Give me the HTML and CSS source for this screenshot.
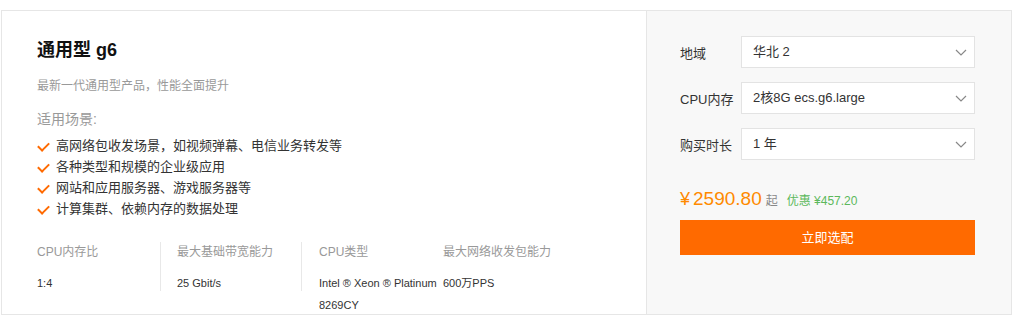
FILE: index.html
```html
<!DOCTYPE html>
<html lang="zh-CN">

<head>
    <meta charset="UTF-8">
    <title>通用型 g6</title>
    <link rel="stylesheet" href="styles.css">
</head>

<body>
    <div class="card">
        <div class="info">
            <h2 class="title">通用型 g6</h2>
            <p class="desc">最新一代通用型产品，性能全面提升</p>
            <p class="scene">适用场景:</p>
            <ul class="uses">
                <li>高网络包收发场景，如视频弹幕、电信业务转发等</li>
                <li>各种类型和规模的企业级应用</li>
                <li>网站和应用服务器、游戏服务器等</li>
                <li>计算集群、依赖内存的数据处理</li>
            </ul>
            <div class="specs">
                <div class="spec s1">
                    <div class="spec-name">CPU内存比</div>
                    <div class="spec-val">1:4</div>
                </div>
                <div class="spec s2">
                    <div class="spec-name">最大基础带宽能力</div>
                    <div class="spec-val">25 Gbit/s</div>
                </div>
                <div class="spec s3">
                    <div class="spec-name">CPU类型</div>
                    <div class="spec-val">Intel ® Xeon ® Platinum 8269CY</div>
                </div>
                <div class="spec s4">
                    <div class="spec-name">最大网络收发包能力</div>
                    <div class="spec-val">600万PPS</div>
                </div>
            </div>
        </div>
        <div class="buy">
            <div class="row">
                <span class="label">地域</span>
                <div class="select">华北 2<svg class="arrow" width="12" height="7" viewBox="0 0 12 7"><path d="M1 1l5 5 5-5" fill="none" stroke="#888" stroke-width="1.2"/></svg></div>
            </div>
            <div class="row">
                <span class="label">CPU内存</span>
                <div class="select">2核8G ecs.g6.large<svg class="arrow" width="12" height="7" viewBox="0 0 12 7"><path d="M1 1l5 5 5-5" fill="none" stroke="#888" stroke-width="1.2"/></svg></div>
            </div>
            <div class="row">
                <span class="label">购买时长</span>
                <div class="select">1 年<svg class="arrow" width="12" height="7" viewBox="0 0 12 7"><path d="M1 1l5 5 5-5" fill="none" stroke="#888" stroke-width="1.2"/></svg></div>
            </div>
            <div class="price">
                <span class="yen">¥</span><span class="num">2590.80</span><span class="qi">起</span>
                <span class="off">优惠 ¥457.20</span>
            </div>
            <a class="btn" href="#">立即选配</a>
        </div>
    </div>
</body>

</html>
```

FILE: styles.css
```css
* {
    margin: 0;
    padding: 0;
    list-style: none;
    box-sizing: border-box;
}

body {
    background: #fff;
    font-family: "Liberation Sans", "Noto Sans CJK SC", sans-serif;
    color: #333;
}

.card {
    display: flex;
    width: 1011px;
    height: 305px;
    margin: 10px 0 0 1px;
    border: 1px solid #e6e6e6;
}

.info {
    width: 644px;
    padding: 27px 0 0 35px;
}

.title {
    font-size: 18px;
    font-weight: bold;
    color: #111;
    line-height: 24px;
}

.desc {
    margin-top: 14px;
    font-size: 12px;
    color: #999;
    line-height: 20px;
}

.scene {
    margin-top: 13px;
    font-size: 14px;
    color: #999;
    line-height: 20px;
}

.uses {
    margin-top: 6px;
}

.uses li {
    position: relative;
    padding-left: 19px;
    font-size: 13px;
    line-height: 21px;
    color: #333;
}

.uses li::before {
    content: "";
    position: absolute;
    left: 3px;
    top: 5px;
    width: 5px;
    height: 9px;
    border-right: 2px solid #ff6a00;
    border-bottom: 2px solid #ff6a00;
    transform: rotate(45deg);
}

.specs {
    display: flex;
    margin-top: 23px;
}

.spec {
    height: 49px;
}

.spec-name {
    font-size: 12px;
    color: #999;
    line-height: 20px;
}

.spec-val {
    margin-top: 10px;
    font-size: 11px;
    color: #333;
    line-height: 22px;
}

.s1 {
    width: 124px;
    border-right: 1px solid #e8e8e8;
}

.s2 {
    width: 141px;
    padding-left: 16px;
    border-right: 1px solid #e8e8e8;
}

.s3 {
    width: 141px;
    padding-left: 17px;
}

.s3 .spec-val {
    width: 120px;
}

.buy {
    flex: 1;
    background: #f8f8f8;
    border-left: 1px solid #e6e6e6;
    padding: 25px 35px 0 33px;
}

.row {
    display: flex;
    align-items: center;
    margin-bottom: 14px;
}

.label {
    width: 61px;
    font-size: 13px;
    color: #333;
}

.select {
    position: relative;
    width: 234px;
    height: 32px;
    line-height: 30px;
    padding-left: 11px;
    background: #fff;
    border: 1px solid #e3e3e3;
    font-size: 13px;
    color: #333;
}

.arrow {
    position: absolute;
    right: 7px;
    top: 12px;
}

.price {
    margin-top: 28px;
    display: flex;
    align-items: baseline;
    height: 26px;
}

.yen {
    font-size: 18px;
    color: #ff8a00;
    margin-right: 3px;
}

.num {
    font-size: 19px;
    color: #ff8a00;
}

.qi {
    font-size: 12px;
    color: #888;
    margin-left: 4px;
}

.off {
    font-size: 12px;
    color: #5cb85c;
    margin-left: 9px;
}

.btn {
    display: block;
    margin-top: 6px;
    width: 295px;
    height: 35px;
    line-height: 35px;
    background: #ff6a00;
    color: #fff;
    text-align: center;
    font-size: 13px;
    text-decoration: none;
}
```
